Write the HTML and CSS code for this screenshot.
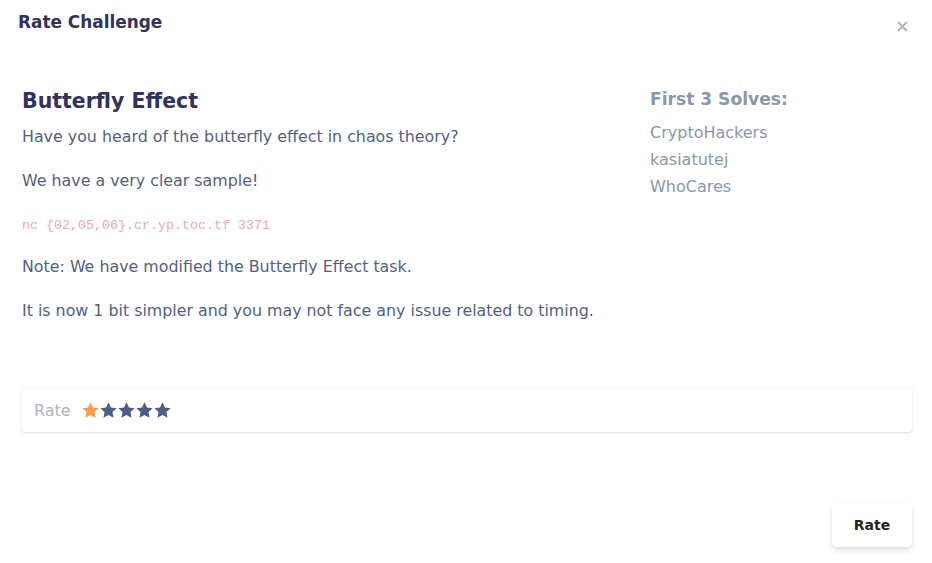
FILE: index.html
```html
<!DOCTYPE html>
<html>
<head>
<meta charset="utf-8">
<link rel="stylesheet" href="styles.css">
</head>
<body>
<div class="modal">
  <div class="modal-header">
    <h5 class="modal-title">Rate Challenge</h5>
    <button class="close" aria-label="Close"><svg viewBox="0 0 11 11" width="11" height="11"><path d="M1 1L10 10M10 1L1 10"/></svg></button>
  </div>
  <div class="modal-body">
    <div class="row">
      <div class="main">
        <h3 class="chal-name">Butterfly Effect</h3>
        <p>Have you heard of the butterfly effect in chaos theory?</p>
        <p>We have a very clear sample!</p>
        <p class="code-p"><code>nc {02,05,06}.cr.yp.toc.tf 3371</code></p>
        <p>Note: We have modified the Butterfly Effect task.</p>
        <p>It is now 1 bit simpler and you may not face any issue related to timing.</p>
      </div>
      <div class="side">
        <h4 class="solves-title">First 3 Solves:</h4>
        <ul class="solves">
          <li>CryptoHackers</li>
          <li>kasiatutej</li>
          <li>WhoCares</li>
        </ul>
      </div>
    </div>
    <div class="rate-box">
      <span class="rate-label">Rate</span>
      <span class="stars">
        <svg class="star on" viewBox="0 0 24 24"><path d="M12 1.5l3.1 6.6 7.2.9-5.3 5 1.4 7.1L12 17.6l-6.4 3.5L7 14l-5.3-5 7.2-.9z"/></svg>
        <svg class="star" viewBox="0 0 24 24"><path d="M12 1.5l3.1 6.6 7.2.9-5.3 5 1.4 7.1L12 17.6l-6.4 3.5L7 14l-5.3-5 7.2-.9z"/></svg>
        <svg class="star" viewBox="0 0 24 24"><path d="M12 1.5l3.1 6.6 7.2.9-5.3 5 1.4 7.1L12 17.6l-6.4 3.5L7 14l-5.3-5 7.2-.9z"/></svg>
        <svg class="star" viewBox="0 0 24 24"><path d="M12 1.5l3.1 6.6 7.2.9-5.3 5 1.4 7.1L12 17.6l-6.4 3.5L7 14l-5.3-5 7.2-.9z"/></svg>
        <svg class="star" viewBox="0 0 24 24"><path d="M12 1.5l3.1 6.6 7.2.9-5.3 5 1.4 7.1L12 17.6l-6.4 3.5L7 14l-5.3-5 7.2-.9z"/></svg>
      </span>
    </div>
  </div>
  <div class="modal-footer">
    <button class="btn-rate">Rate</button>
  </div>
</div>
</body>
</html>
```

FILE: styles.css
```css
* { box-sizing: border-box; }
html, body { margin: 0; padding: 0; background: #fff; }
body {
  font-family: "DejaVu Sans", sans-serif;
  color: #525f7f;
  width: 932px;
  height: 563px;
  overflow: hidden;
}
.modal { display: flex; flex-direction: column; height: 563px; }
.modal-header {
  display: flex;
  justify-content: space-between;
  align-items: flex-start;
  padding: 10px 24px 0 18px;
}
.modal-title {
  margin: 0;
  font-size: 16.9px;
  font-weight: 700;
  color: #32325d;
  line-height: 24px;
}
.close {
  background: none;
  border: none;
  padding: 0;
  margin-top: 11px;
  width: 11px;
  height: 11px;
  cursor: pointer;
  display: block;
}
.close svg { display: block; stroke: #b3b3b3; stroke-width: 1.8; fill: none; }
.modal-body { padding: 53px 20px 0 22px; }
.row { display: flex; }
.main { width: 628px; }
.side { flex: 1; }
.chal-name {
  margin: 0 0 10px;
  font-size: 20.5px;
  font-weight: 700;
  color: #32325d;
  line-height: 28px;
}
.main p {
  margin: 0 0 20px;
  font-size: 15.85px;
  line-height: 24px;
}
.main p.code-p { line-height: 22px; margin-bottom: 18px; }
.main p:last-child { margin-bottom: 0; }
code {
  font-family: "Liberation Mono", monospace;
  font-size: 13.33px;
  color: #f3a4b5;
}
.solves-title {
  margin: 0 0 8px;
  font-size: 17.1px;
  font-weight: 700;
  color: #8898aa;
  line-height: 24px;
}
.solves { list-style: none; margin: 0; padding: 0; }
.solves li {
  font-size: 16px;
  line-height: 27px;
  color: #8898aa;
}
.rate-box {
  margin-top: 65px;
  height: 44px;
  display: flex;
  align-items: center;
  padding: 0 12px;
  border-radius: 4px;
  box-shadow: 0 1px 3px rgba(50,50,93,0.15), 0 1px 0 rgba(0,0,0,0.02);
}
.rate-label { color: #adb5bd; font-size: 16px; margin-right: 10px; }
.stars { display: flex; }
.star { width: 19px; height: 19px; margin-right: -1px; fill: #4f5d80; }
.star.on { fill: #fb9b43; }
.modal-footer {
  margin-top: auto;
  display: flex;
  justify-content: flex-end;
  padding: 0 20px 16px;
}
.btn-rate {
  width: 80px;
  height: 43px;
  border: none;
  border-radius: 4px;
  background: #fff;
  font-family: "DejaVu Sans", sans-serif;
  font-weight: 700;
  font-size: 14px;
  color: #212529;
  padding: 0 0 2px;
  box-shadow: 0 4px 6px rgba(50,50,93,0.11), 0 1px 3px rgba(0,0,0,0.08);
}
```
